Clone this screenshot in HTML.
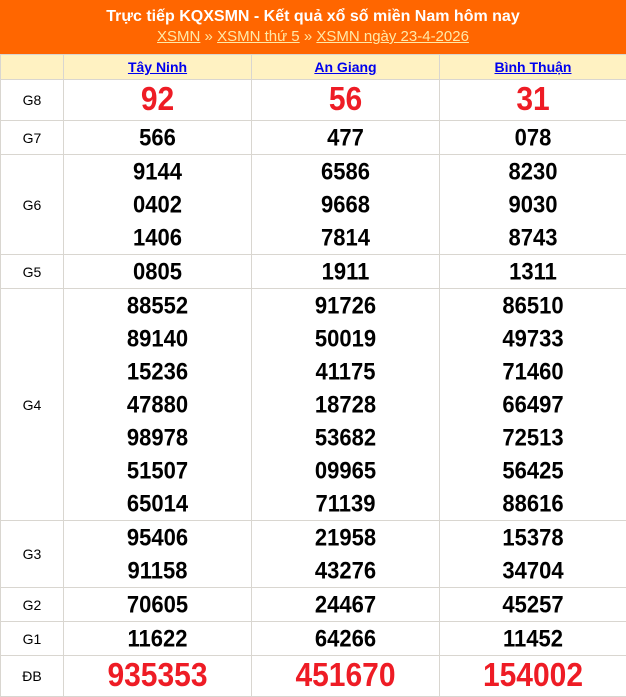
<!DOCTYPE html>
<html><head><meta charset="utf-8"><style>
body{margin:0;width:626px;height:697px;overflow:hidden;background:#fff;font-family:"Liberation Sans",Arial,sans-serif}
.hd{background:#ff6600;height:54px;color:#fff;text-align:center;box-sizing:border-box;padding-top:7px}
.hd .t{font-weight:bold;font-size:16px;line-height:20px}
.hd .s{font-size:15px;line-height:19px;color:#ffe9a8}
.hd .s a{color:#ffe9a8;text-decoration:underline}
table{border-collapse:collapse;width:626px;table-layout:fixed}
td{border:1px solid #d9d6d0;text-align:center;padding:0}
td.g{font-size:14px;color:#000}
.h td{background:#fff2c2;height:24px;font-size:14px;font-weight:bold}
.h a{color:#0000ee;text-decoration:underline}
.n{font-weight:bold;font-size:22px;line-height:33px;color:#000}
.n span{display:block;height:33px;transform:scaleY(1.08)}
.r{color:#ee1c25;font-size:30px;font-weight:bold}
.r span{display:inline-block;transform:scaleY(1.12)}
</style></head><body>
<div class="hd"><div class="t">Trực tiếp KQXSMN - Kết quả xổ số miền Nam hôm nay</div>
<div class="s"><a>XSMN</a> » <a>XSMN thứ 5</a> » <a>XSMN ngày 23-4-2026</a></div></div>
<table>
<colgroup><col style="width:63px"><col style="width:188px"><col style="width:188px"><col style="width:187px"></colgroup>
<tr class="h"><td></td><td><a>Tây Ninh</a></td><td><a>An Giang</a></td><td><a>Bình Thuận</a></td></tr>
<tr style="height:41px"><td class="g">G8</td><td class="r"><span>92</span></td><td class="r"><span>56</span></td><td class="r"><span>31</span></td></tr>
<tr style="height:34px"><td class="g">G7</td><td class="n"><span>566</span></td><td class="n"><span>477</span></td><td class="n"><span>078</span></td></tr>
<tr style="height:100px"><td class="g">G6</td><td class="n"><span>9144</span><span>0402</span><span>1406</span></td><td class="n"><span>6586</span><span>9668</span><span>7814</span></td><td class="n"><span>8230</span><span>9030</span><span>8743</span></td></tr>
<tr style="height:34px"><td class="g">G5</td><td class="n"><span>0805</span></td><td class="n"><span>1911</span></td><td class="n"><span>1311</span></td></tr>
<tr style="height:232px"><td class="g">G4</td><td class="n"><span>88552</span><span>89140</span><span>15236</span><span>47880</span><span>98978</span><span>51507</span><span>65014</span></td><td class="n"><span>91726</span><span>50019</span><span>41175</span><span>18728</span><span>53682</span><span>09965</span><span>71139</span></td><td class="n"><span>86510</span><span>49733</span><span>71460</span><span>66497</span><span>72513</span><span>56425</span><span>88616</span></td></tr>
<tr style="height:67px"><td class="g">G3</td><td class="n"><span>95406</span><span>91158</span></td><td class="n"><span>21958</span><span>43276</span></td><td class="n"><span>15378</span><span>34704</span></td></tr>
<tr style="height:33px"><td class="g">G2</td><td class="n"><span>70605</span></td><td class="n"><span>24467</span></td><td class="n"><span>45257</span></td></tr>
<tr style="height:33px"><td class="g">G1</td><td class="n"><span>11622</span></td><td class="n"><span>64266</span></td><td class="n"><span>11452</span></td></tr>
<tr style="height:41px"><td class="g">ĐB</td><td class="r"><span>935353</span></td><td class="r"><span>451670</span></td><td class="r"><span>154002</span></td></tr>
</table>
</body></html>
